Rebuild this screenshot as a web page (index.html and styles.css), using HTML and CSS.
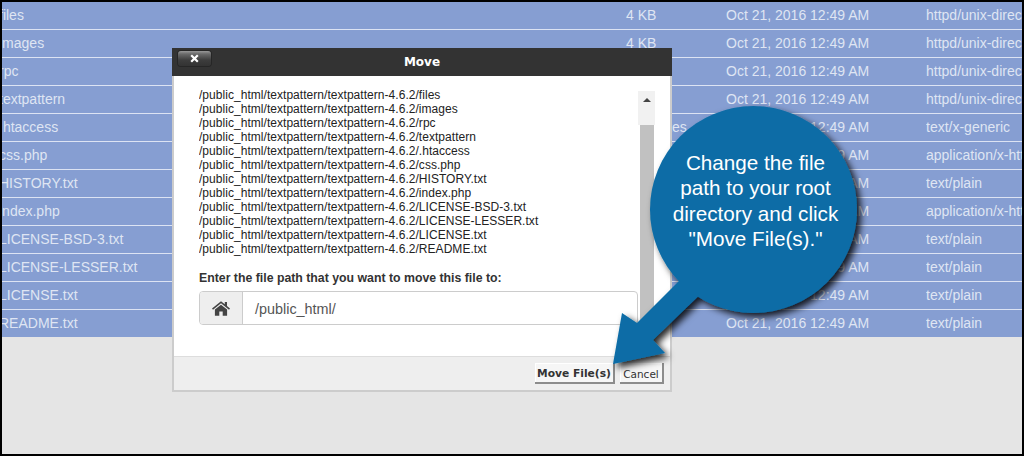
FILE: index.html
```html
<!DOCTYPE html>
<html lang="en">
<head>
<meta charset="utf-8">
<title>Move</title>
<link rel="stylesheet" href="styles.css">
</head>
<body>
<div class="frame">
  <div class="files">
    <div class="row"><span class="name">files</span><span>4 KB</span><span>Oct 21, 2016 12:49 AM</span><span class="type">httpd/unix-directory</span></div>
    <div class="row"><span class="name">images</span><span>4 KB</span><span>Oct 21, 2016 12:49 AM</span><span class="type">httpd/unix-directory</span></div>
    <div class="row"><span class="name">rpc</span><span>4 KB</span><span>Oct 21, 2016 12:49 AM</span><span class="type">httpd/unix-directory</span></div>
    <div class="row"><span class="name">textpattern</span><span>4 KB</span><span>Oct 21, 2016 12:49 AM</span><span class="type">httpd/unix-directory</span></div>
    <div class="row"><span class="name">.htaccess</span><span>177 bytes</span><span>Oct 21, 2016 12:49 AM</span><span class="type">text/x-generic</span></div>
    <div class="row"><span class="name">css.php</span><span>1 KB</span><span>Oct 21, 2016 12:49 AM</span><span class="type">application/x-httpd-php</span></div>
    <div class="row"><span class="name">HISTORY.txt</span><span>84 KB</span><span>Oct 21, 2016 12:49 AM</span><span class="type">text/plain</span></div>
    <div class="row"><span class="name">index.php</span><span>3 KB</span><span>Oct 21, 2016 12:49 AM</span><span class="type">application/x-httpd-php</span></div>
    <div class="row"><span class="name">LICENSE-BSD-3.txt</span><span>2 KB</span><span>Oct 21, 2016 12:49 AM</span><span class="type">text/plain</span></div>
    <div class="row"><span class="name">LICENSE-LESSER.txt</span><span>8 KB</span><span>Oct 21, 2016 12:49 AM</span><span class="type">text/plain</span></div>
    <div class="row"><span class="name">LICENSE.txt</span><span>18 KB</span><span>Oct 21, 2016 12:49 AM</span><span class="type">text/plain</span></div>
    <div class="row"><span class="name">README.txt</span><span>2 KB</span><span>Oct 21, 2016 12:49 AM</span><span class="type">text/plain</span></div>
  </div>

  <section class="dialog">
    <header class="dialog-head">
      <button class="close" type="button" aria-label="Close">
        <svg class="close-icon" viewBox="0 0 9 9" aria-hidden="true"><path d="M1.2 1.2 L7.8 7.8 M7.8 1.2 L1.2 7.8" stroke="#fff" stroke-width="2.2" fill="none"/></svg>
      </button>
      <h1 class="dialog-title">Move</h1>
    </header>
    <div class="dialog-body">
      <div class="dialog-content">
        <ul class="path-list">
          <li>/public_html/textpattern/textpattern-4.6.2/files</li>
          <li>/public_html/textpattern/textpattern-4.6.2/images</li>
          <li>/public_html/textpattern/textpattern-4.6.2/rpc</li>
          <li>/public_html/textpattern/textpattern-4.6.2/textpattern</li>
          <li>/public_html/textpattern/textpattern-4.6.2/.htaccess</li>
          <li>/public_html/textpattern/textpattern-4.6.2/css.php</li>
          <li>/public_html/textpattern/textpattern-4.6.2/HISTORY.txt</li>
          <li>/public_html/textpattern/textpattern-4.6.2/index.php</li>
          <li>/public_html/textpattern/textpattern-4.6.2/LICENSE-BSD-3.txt</li>
          <li>/public_html/textpattern/textpattern-4.6.2/LICENSE-LESSER.txt</li>
          <li>/public_html/textpattern/textpattern-4.6.2/LICENSE.txt</li>
          <li>/public_html/textpattern/textpattern-4.6.2/README.txt</li>
        </ul>
        <label class="path-label">Enter the file path that you want to move this file to:</label>
        <div class="input-group">
          <span class="addon">
            <svg class="home" viewBox="0 0 18 15" aria-hidden="true"><path d="M9 0.2 L12.8 3.3 V1 H15 V5.1 L18 7.6 L17 8.8 L9 2.3 L1 8.8 L0 7.6 Z M2.9 8.6 L9 3.7 L15.1 8.6 V14.8 H10.7 V10.4 H7.3 V14.8 H2.9 Z" fill="#444"/></svg>
          </span>
          <span class="path-input">/public_html/</span>
        </div>
      </div>
      <div class="scrollbar">
        <div class="scroll-top"><span class="scroll-arrow"></span></div>
        <div class="scroll-thumb"></div>
      </div>
    </div>
    <footer class="dialog-foot">
      <button class="btn btn-primary" type="button">Move File(s)</button>
      <button class="btn" type="button">Cancel</button>
    </footer>
  </section>

  <aside class="callout">
    <svg class="callout-shape" viewBox="0 0 280 290" aria-hidden="true">
      <defs>
        <filter id="shade" x="-10%" y="-10%" width="125%" height="125%">
          <feDropShadow dx="4" dy="4" stdDeviation="3.5" flood-color="#000" flood-opacity="0.85"/>
        </filter>
      </defs>
      <g filter="url(#shade)" fill="#0a6ca6">
        <circle cx="153.5" cy="114.5" r="103.5"/>
        <polygon points="22,218 37,228 95,170 112,188 53,245 65,258 13,269"/>
      </g>
    </svg>
    <p class="callout-text">Change the file<br>path to your root<br>directory and click<br>"Move File(s)."</p>
  </aside>
</div>
</body>
</html>
```
FILE: styles.css
```css
* { box-sizing: border-box; }
html, body { margin: 0; padding: 0; }
body { font-family: "Liberation Sans", Arial, sans-serif; }

.frame {
  position: relative;
  width: 1024px;
  height: 456px;
  border: 2px solid #000;
  background: #e5e5e5;
  overflow: hidden;
}

.files { background: #869ed2; height: 335px; overflow: hidden; }
.row {
  display: grid;
  grid-template-columns: 624px 100px 200px 1fr;
  height: 28px;
  align-items: center;
  padding-bottom: 1px;
  border-bottom: 1px solid #dce3f3;
  color: #dfe5f3;
  font-size: 14px;
  white-space: nowrap;
}
.name { margin-left: -3px; }
.type { overflow: hidden; }

.dialog {
  position: absolute;
  left: 170px;
  top: 46px;
  width: 500px;
  height: 344px;
  display: flex;
  flex-direction: column;
  background: #fff;
  border: 2px solid #ccc;
  border-top: 0;
}
.dialog-head {
  position: relative;
  flex: none;
  height: 28px;
  margin: 0 -2px;
  background: #333;
  text-align: center;
}
.dialog-title {
  margin: 0;
  color: #fff;
  font: bold 12px/28px "DejaVu Sans", sans-serif;
}
.close {
  position: absolute;
  left: 6px;
  top: 3px;
  width: 33px;
  height: 15px;
  display: flex;
  align-items: center;
  justify-content: center;
  padding: 0;
  border: 0;
  border-radius: 3px;
  background: linear-gradient(#999 0, #6a6a6a 20%, #3d3d3d 60%, #333 100%);
  box-shadow: 0 0 0 1px #262626;
}
.close-icon { width: 9px; height: 9px; }

.dialog-body {
  flex: 1;
  display: flex;
  min-height: 0;
  padding: 12px 16px 0 25px;
}
.dialog-content { width: 439px; flex: none; }
.path-list {
  height: 171px;
  margin: 0;
  padding: 0;
  list-style: none;
  color: #222;
  font-size: 12px;
  letter-spacing: 0.04px;
  line-height: 14px;
  overflow: hidden;
}
.path-label {
  display: block;
  margin-top: 12px;
  color: #333;
  font-size: 12.3px;
  font-weight: bold;
  line-height: 14px;
}
.input-group {
  display: flex;
  height: 34px;
  margin-top: 6px;
  border: 1px solid #ccc;
  border-radius: 4px;
  overflow: hidden;
}
.addon {
  flex: none;
  width: 43px;
  display: flex;
  align-items: center;
  justify-content: center;
  background: #eee;
  border-right: 1px solid #ccc;
}
.home { width: 18px; height: 15px; }
.path-input {
  padding: 1px 0 0 12px;
  color: #555;
  font-size: 14.4px;
  line-height: 32px;
}
.scrollbar { width: 17px; flex: none; display: flex; flex-direction: column; height: 235px; margin-top: 3px; }
.scroll-top {
  height: 34px;
  background: #f1f1f1;
  display: flex;
  justify-content: center;
  padding-top: 7px;
}
.scroll-arrow {
  width: 0;
  height: 0;
  border: 4px solid transparent;
  border-top: 0;
  border-bottom: 4px solid #444;
}
.scroll-thumb { flex: 1; margin: 0 1px 0 2px; background: #c1c1c1; }

.dialog-foot {
  flex: none;
  height: 34px;
  display: flex;
  justify-content: flex-end;
  gap: 5px;
  padding: 6px 6px 0 0;
  background: #eee;
  border-top: 1px solid #ddd;
}
.btn {
  width: 44px;
  height: 21px;
  padding: 0 2px 0 0;
  border: 0;
  background: #f6f6f6;
  box-shadow: inset -2px -2px 0 #8c8c8c, inset 1px 1px 0 #fff;
  color: #333;
  font: 10.5px/18px "DejaVu Sans", sans-serif;
}
.btn-primary { width: 80px; font-weight: bold; font-size: 10.7px; }

.callout { position: absolute; left: 598px; top: 93px; width: 280px; height: 290px; }
.callout-shape { display: block; width: 280px; height: 290px; }
.callout-text {
  position: absolute;
  left: 33px;
  top: 55px;
  width: 245px;
  margin: 0;
  color: #fff;
  font-size: 20.7px;
  line-height: 25.3px;
  text-align: center;
}
```
